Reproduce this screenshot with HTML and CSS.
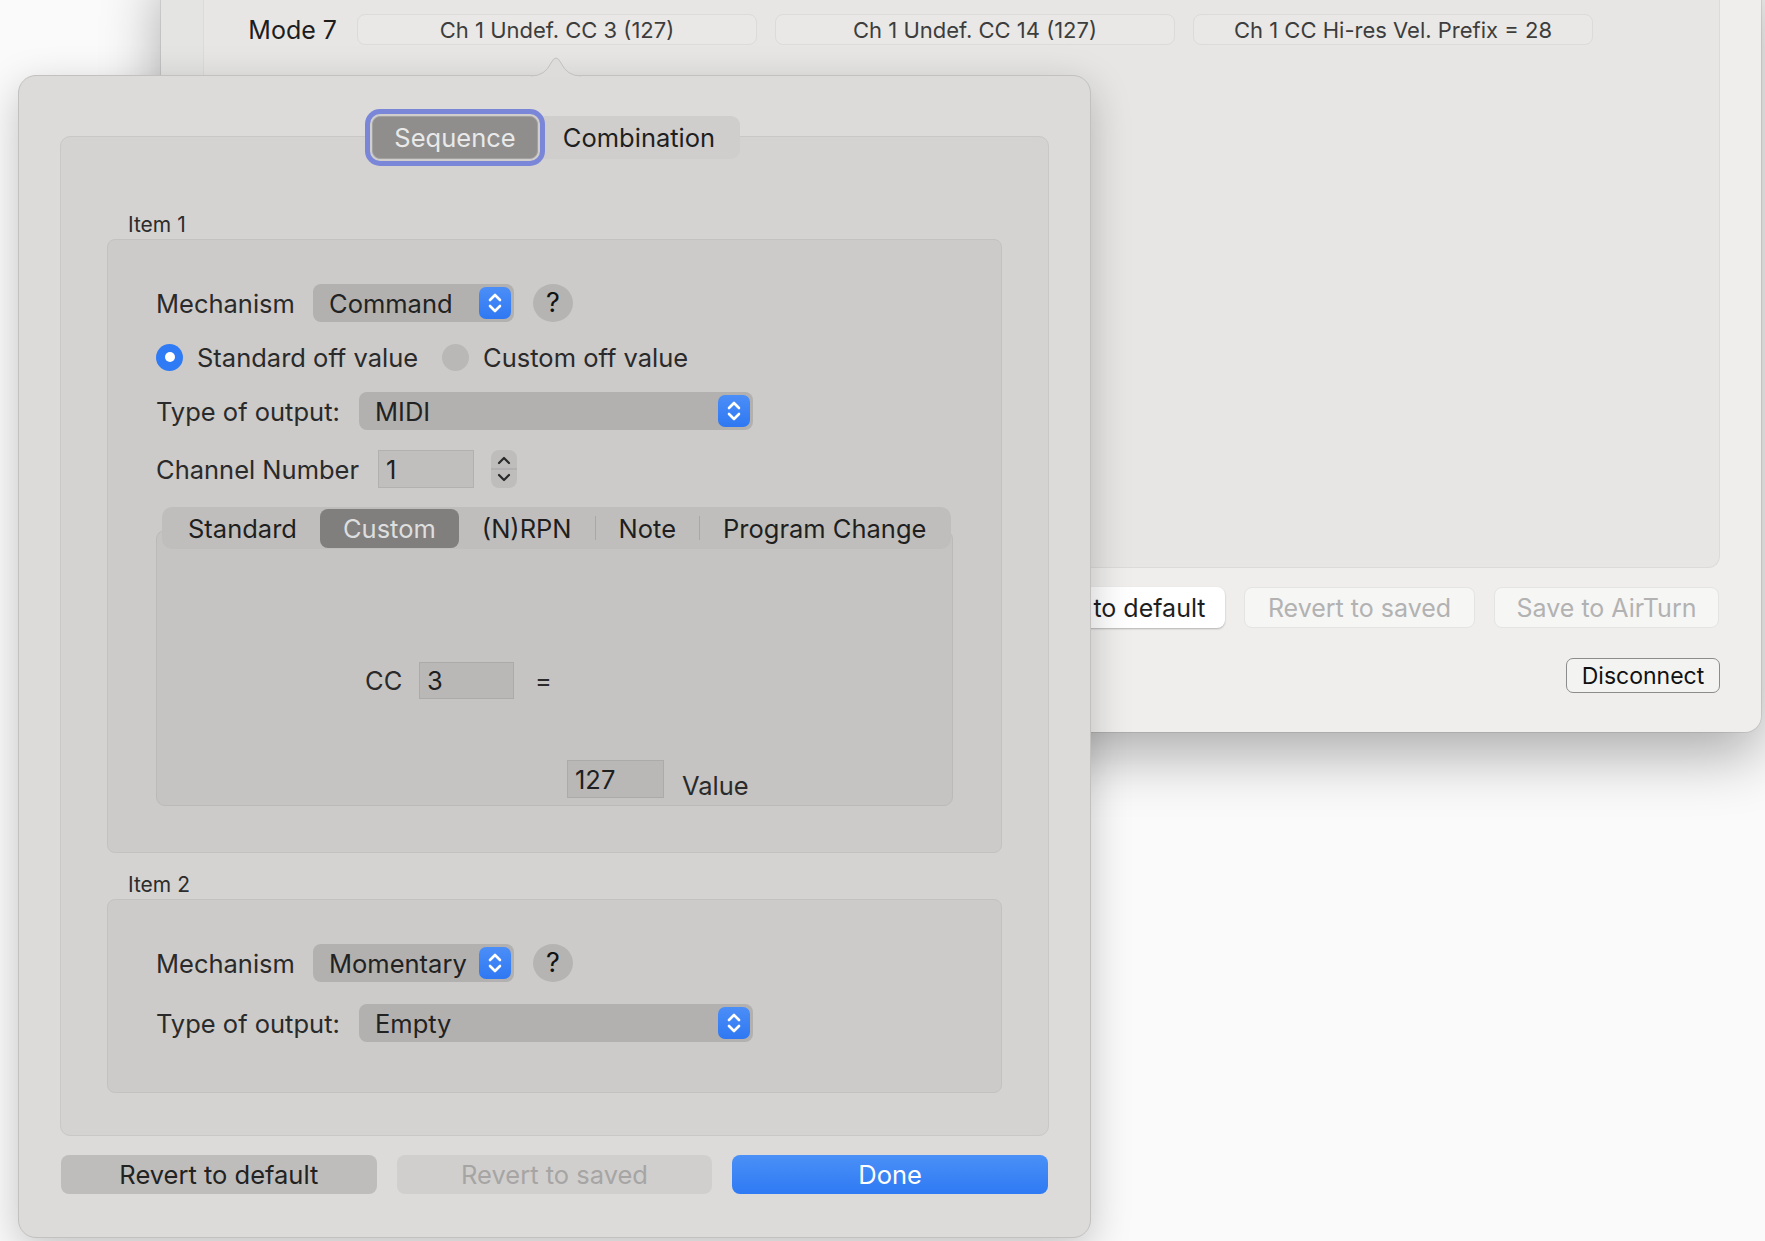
FILE: index.html
```html
<!DOCTYPE html>
<html lang="en">
<head>
    <meta charset="UTF-8">
    <title>AirTurn Mode Editor</title>
    <link rel="stylesheet" href="styles.css">
</head>
<body>
    <!-- Main window behind the popover -->
    <div class="window">
        <div class="window-strip"></div>
        <div class="window-main">
            <div class="mode-box">
                <div class="mode-row">
                    <span class="mode-label">Mode 7</span>
                    <div class="mode-cell">Ch 1 Undef. CC 3 (127)</div>
                    <div class="mode-cell">Ch 1 Undef. CC 14 (127)</div>
                    <div class="mode-cell">Ch 1 CC Hi-res Vel. Prefix = 28</div>
                </div>
            </div>
            <div class="window-actions">
                <button class="win-btn win-btn-default">Revert to default</button>
                <button class="win-btn win-btn-disabled">Revert to saved</button>
                <button class="win-btn win-btn-disabled win-btn-save">Save to AirTurn</button>
            </div>
            <div class="disconnect-row">
                <button class="disconnect-btn">Disconnect</button>
            </div>
        </div>
    </div>

    <!-- Popover -->
    <div class="popover">
        <svg class="popover-arrow" width="50" height="27" viewBox="0 0 50 27">
            <path d="M0 26 Q14 26 20 13 Q25 3 30 13 Q36 26 50 26 L50 27 L0 27 Z" fill="#dddcdb"/>
            <path d="M0 26 Q14 26 20 13 Q25 3 30 13 Q36 26 50 26" fill="none" stroke="#c2c1c0" stroke-width="1"/>
        </svg>

        <div class="top-seg">
            <div class="top-seg-item on">Sequence</div>
            <div class="top-seg-item">Combination</div>
        </div>

        <div class="tab-box">
            <div class="item-label">Item 1</div>
            <div class="group group-one">
                <div class="row row-mech">
                    <span class="label label-mech">Mechanism</span>
                    <div class="popup popup-short">
                        <span>Command</span>
                        <span class="popup-arrows">
                            <svg width="32" height="32" viewBox="0 0 32 32"><path d="M11 13 L16 8 L21 13 M11 19 L16 24 L21 19" fill="none" stroke="#fff" stroke-width="2.6" stroke-linecap="round" stroke-linejoin="round"/></svg>
                        </span>
                    </div>
                    <div class="help-btn">?</div>
                </div>
                <div class="row row-radio">
                    <span class="radio on"></span>
                    <span class="radio-text">Standard off value</span>
                    <span class="radio"></span>
                    <span class="radio-text">Custom off value</span>
                </div>
                <div class="row row-gap">
                    <span class="label label-type">Type of output:</span>
                    <div class="popup popup-wide">
                        <span>MIDI</span>
                        <span class="popup-arrows">
                            <svg width="32" height="32" viewBox="0 0 32 32"><path d="M11 13 L16 8 L21 13 M11 19 L16 24 L21 19" fill="none" stroke="#fff" stroke-width="2.6" stroke-linecap="round" stroke-linejoin="round"/></svg>
                        </span>
                    </div>
                </div>
                <div class="row row-channel">
                    <span class="label label-channel">Channel Number</span>
                    <div class="field field-channel">1</div>
                    <svg class="stepper" width="26" height="38" viewBox="0 0 26 38">
                        <rect x="0" y="0" width="26" height="38" rx="8" fill="#bebdbc"/>
                        <line x1="0" y1="19" x2="26" y2="19" stroke="#aeadac" stroke-width="1.5"/>
                        <path d="M8 13 L13 8 L18 13 M8 25 L13 30 L18 25" fill="none" stroke="#2a2a2a" stroke-width="2.2" stroke-linecap="round" stroke-linejoin="round"/>
                    </svg>
                </div>

                <div class="midi-tabs">
                    <div class="midi-bar">
                        <span class="midi-seg">Standard</span>
                        <span class="midi-seg on">Custom</span>
                        <span class="midi-seg">(N)RPN</span>
                        <span class="midi-sep"></span>
                        <span class="midi-seg">Note</span>
                        <span class="midi-sep"></span>
                        <span class="midi-seg">Program Change</span>
                    </div>
                    <div class="midi-box">
                        <div class="cc-row">
                            <span class="cc-label">CC</span>
                            <div class="field field-cc">3</div>
                            <span class="cc-eq">=</span>
                        </div>
                        <div class="value-row">
                            <div class="field field-value">127</div>
                            <span class="value-label">Value</span>
                        </div>
                    </div>
                </div>
            </div>

            <div class="item-label item-label-two">Item 2</div>
            <div class="group group-two">
                <div class="row row-mech">
                    <span class="label label-mech">Mechanism</span>
                    <div class="popup popup-short">
                        <span>Momentary</span>
                        <span class="popup-arrows">
                            <svg width="32" height="32" viewBox="0 0 32 32"><path d="M11 13 L16 8 L21 13 M11 19 L16 24 L21 19" fill="none" stroke="#fff" stroke-width="2.6" stroke-linecap="round" stroke-linejoin="round"/></svg>
                        </span>
                    </div>
                    <div class="help-btn">?</div>
                </div>
                <div class="row row-type-two">
                    <span class="label label-type">Type of output:</span>
                    <div class="popup popup-wide">
                        <span>Empty</span>
                        <span class="popup-arrows">
                            <svg width="32" height="32" viewBox="0 0 32 32"><path d="M11 13 L16 8 L21 13 M11 19 L16 24 L21 19" fill="none" stroke="#fff" stroke-width="2.6" stroke-linecap="round" stroke-linejoin="round"/></svg>
                        </span>
                    </div>
                </div>
            </div>
        </div>

        <div class="popover-actions">
            <button class="pop-btn pop-btn-default">Revert to default</button>
            <button class="pop-btn pop-btn-disabled">Revert to saved</button>
            <button class="pop-btn pop-btn-done">Done</button>
        </div>
    </div>
</body>
</html>
```

FILE: styles.css
```css
/* Basic reset */
* {
    margin: 0;
    padding: 0;
    box-sizing: border-box;
}
body {
    width: 1765px;
    height: 1241px;
    position: relative;
    overflow: hidden;
    background: #fafafa;
    font-family: "Inter", "Noto Sans", sans-serif;
    color: #262626;
}
button {
    font-family: inherit;
    border: none;
}

/* Main window (sits on the desktop) */
.window {
    position: absolute;
    left: 161px;
    top: -40px;
    width: 1600px;
    height: 772px;
    display: flex;
    background: #efeeed;
    border-radius: 16px;
    box-shadow: 0 22px 60px rgba(0, 0, 0, 0.32), 0 0 0 1px rgba(0, 0, 0, 0.08);
    overflow: hidden;
}
.window-strip {
    width: 42px;
    background: #e4e4e3;
}
.window-main {
    flex: 1;
    display: flex;
    flex-direction: column;
    padding-right: 41px;
}
.mode-box {
    margin-top: 20px;
    height: 588px;
    padding-top: 34px;
    background: #e7e6e4;
    border: 1px solid #dcdbd9;
    border-top: none;
    border-radius: 0 0 12px 12px;
}
.mode-row {
    display: flex;
    align-items: center;
    height: 31px;
}
.mode-label {
    width: 133px;
    margin-right: 20px;
    text-align: right;
    font-size: 25px;
    color: #1d1d1d;
}
.mode-cell {
    width: 400px;
    height: 31px;
    margin-right: 18px;
    display: flex;
    align-items: center;
    justify-content: center;
    border: 1.5px solid #dcdbd9;
    border-radius: 8px;
    background: #e9e8e6;
    font-size: 22px;
    color: #3d3d3d;
}
.window-actions {
    display: flex;
    justify-content: flex-end;
    gap: 19px;
    margin-top: 19px;
    padding-right: 1px;
}
.win-btn {
    height: 41px;
    border-radius: 8px;
    font-size: 25px;
}
.win-btn-default {
    width: 234px;
    background: #fff;
    color: #1e1e1e;
    box-shadow: 0 1px 2px rgba(0, 0, 0, 0.25);
}
.win-btn-disabled {
    width: 231px;
    background: #f6f6f5;
    border: 1px solid #e4e4e3;
    color: #b2b2b2;
}
.win-btn-save {
    width: 225px;
}
.disconnect-row {
    display: flex;
    justify-content: flex-end;
    margin-top: 30px;
}
.disconnect-btn {
    width: 154px;
    height: 35px;
    border: 1.5px solid #8c8c8c;
    border-radius: 7px;
    background: #f3f3f2;
    font-size: 23px;
    color: #111;
}

/* Popover */
.popover {
    position: absolute;
    left: 18px;
    top: 75px;
    width: 1073px;
    height: 1163px;
    display: flex;
    flex-direction: column;
    padding: 40px 41px 0;
    background: #dcdbda;
    border: 1px solid #c2c1c0;
    border-radius: 18px;
    box-shadow: 0 12px 40px rgba(0, 0, 0, 0.22);
    font-size: 25.5px;
}
.popover-arrow {
    position: absolute;
    top: -26px;
    left: 512px;
}
.top-seg {
    align-self: center;
    display: flex;
    height: 43px;
    margin-left: 3px;
    background: #cfcecd;
    border-radius: 9px;
    position: relative;
    z-index: 1;
}
.top-seg-item {
    display: flex;
    align-items: center;
    justify-content: center;
    width: 202px;
    color: #1f1f1f;
}
.top-seg-item.on {
    width: 166px;
    background: #8f8e8d;
    border: 1px solid #a3a2a1;
    border-radius: 8px;
    color: #e9e9e9;
    box-shadow: 0 0 0 2px #cfcecd, 0 0 0 7px #7a86d8;
}
.tab-box {
    margin-top: -23px;
    height: 1000px;
    padding: 75px 46px 0;
    background: #d4d3d2;
    border: 1px solid #c9c8c7;
    border-radius: 10px;
}
.item-label {
    height: 26px;
    line-height: 26px;
    margin-left: 21px;
    font-size: 21px;
    color: #2c2c2c;
}
.item-label-two {
    margin-top: 19px;
}
.group {
    margin-top: 1px;
    padding: 44px 48px 0;
    background: #cccbca;
    border: 1px solid #c3c2c1;
    border-radius: 8px;
}
.group-one {
    height: 614px;
}
.group-two {
    height: 194px;
}
.row {
    display: flex;
    align-items: center;
    height: 38px;
    white-space: nowrap;
}
.label {
    color: #2a2a2a;
}
.label-mech {
    width: 157px;
}
.label-type {
    width: 203px;
}
.label-channel {
    width: 222px;
}
.row-radio {
    height: 28px;
    margin-top: 21px;
}
.row-gap {
    margin-top: 21px;
}
.row-channel {
    margin-top: 20px;
}
.row-type-two {
    margin-top: 22px;
}
.popup {
    height: 38px;
    display: flex;
    align-items: center;
    justify-content: space-between;
    padding: 0 3px 0 16px;
    background: #b2b1b0;
    border-radius: 8px;
    color: #222;
}
.popup-short {
    width: 201px;
}
.popup-wide {
    width: 394px;
}
.popup-arrows {
    width: 32px;
    height: 32px;
    border-radius: 7px;
    background: linear-gradient(#4b8ef8, #2f78f2);
}
.popup-arrows svg {
    display: block;
}
.help-btn {
    width: 40px;
    height: 38px;
    margin-left: 19px;
    border-radius: 50%;
    background: #b5b4b3;
    text-align: center;
    line-height: 38px;
    font-size: 27px;
    color: #111;
}
.radio {
    width: 27px;
    height: 27px;
    border-radius: 50%;
    background: #b9b8b7;
    display: flex;
    align-items: center;
    justify-content: center;
}
.radio.on {
    background: #2f7bf5;
}
.radio.on::after {
    content: "";
    width: 10px;
    height: 10px;
    border-radius: 50%;
    background: #fff;
}
.radio-text {
    margin: 0 24px 0 14px;
    color: #2a2a2a;
}
.field {
    height: 38px;
    display: flex;
    align-items: center;
    padding-left: 7px;
    background: rgba(0, 0, 0, 0.06);
    border: 1.5px solid rgba(0, 0, 0, 0.07);
    color: #1f1f1f;
}
.field-channel {
    width: 96px;
}
.stepper {
    margin-left: 17px;
}

/* MIDI tab view */
.midi-tabs {
    margin-top: 19px;
    display: flex;
    flex-direction: column;
}
.midi-bar {
    align-self: flex-start;
    display: flex;
    align-items: center;
    height: 42px;
    margin-left: 6px;
    padding: 0 2px 0 3px;
    background: #bfbebd;
    border-radius: 10px;
    white-space: nowrap;
    position: relative;
    z-index: 1;
}
.midi-seg {
    flex-shrink: 0;
    height: 39px;
    display: flex;
    align-items: center;
    padding: 0 23px;
    color: #1f1f1f;
}
.midi-seg.on {
    background: #807f7e;
    border-radius: 8px;
    color: #dedede;
}
.midi-sep {
    flex-shrink: 0;
    width: 1px;
    height: 24px;
    background: #a9a8a7;
}
.midi-box {
    margin-top: -19px;
    height: 276px;
    padding: 131px 0 0 208px;
    background: #c5c4c3;
    border: 1px solid #bbbab9;
    border-radius: 9px;
}
.cc-row {
    display: flex;
    align-items: center;
}
.cc-label {
    width: 54px;
    color: #2a2a2a;
}
.field-cc {
    width: 95px;
    height: 37px;
}
.cc-eq {
    margin-left: 21px;
    color: #2a2a2a;
}
.value-row {
    display: flex;
    align-items: flex-end;
    margin: 61px 0 0 202px;
}
.field-value {
    width: 97px;
}
.value-label {
    margin: 0 0 -3px 18px;
    color: #2a2a2a;
}

/* Popover buttons */
.popover-actions {
    display: flex;
    gap: 20px;
    margin: 19px 1px 0;
}
.pop-btn {
    flex: 1;
    height: 39px;
    border-radius: 8px;
    font-size: 25.5px;
}
.pop-btn-default {
    background: #bebdbc;
    color: #222;
}
.pop-btn-disabled {
    background: #d0cfce;
    color: #a6a5a4;
}
.pop-btn-done {
    background: linear-gradient(#4a90f7, #2f7af4);
    color: #fff;
}
```
